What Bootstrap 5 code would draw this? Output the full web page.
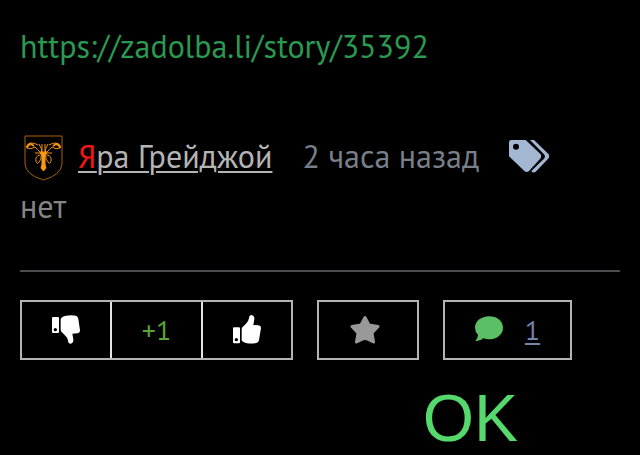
<!DOCTYPE html>
<html lang="ru">
<head>
<meta charset="utf-8">
<meta name="viewport" content="width=device-width, initial-scale=1">
<title>Задолба!ли — 35392</title>
<link href="https://cdn.jsdelivr.net/npm/bootstrap@5.3.0/dist/css/bootstrap.min.css" rel="stylesheet">
<style>
body{background:#000;color:#858585;font:32px/50px "PT Sans","Noto Sans",sans-serif}
.story{padding:21px 20px 0}
.story-link,.story-link:hover{color:#2a9a52}
.meta{margin-top:60px;column-gap:30px}
.crest{margin:4px 15px 0 4px}
.author{color:#b5b5b5;text-decoration-thickness:2px;text-underline-offset:3px}
.author span{color:#f41414}
.when{color:#777f8a}
.tags{margin-top:2px}
.rule{margin:39px 0 28px;border-top:2px solid #4c4d50;opacity:1}
.actions{gap:24px}
.box{height:60px;border:2px solid #b4b4b4;font-size:28px;line-height:56px}
.box svg{margin-bottom:2px}
.vote{width:273px}
.vote>*{flex:1 1 0;background:none;border:0;padding:0;color:#fff}
.vote>*+*{border-left:2px solid #e4e4e4}
.vote .score{color:#58a33a}
.fav{width:102px;background:none;color:#999;padding:0 6px 0 0}
.talk{width:129px;gap:22px;color:#5bbf65}
.talk a{color:#7582aa;text-decoration-thickness:2px;text-underline-offset:3px}
.verdict{margin:25px 102px 0;font:66px/66px "Liberation Sans",Arial,sans-serif;color:#56d86c}
</style>
</head>
<body>
<main class="container-fluid story">
<a class="d-block text-decoration-none story-link" href="https://zadolba.li/story/35392">https://zadolba.li/story/35392</a>

<div class="d-flex flex-wrap align-items-center meta">
<div class="d-flex align-items-center">
<svg class="crest" width="39" height="46" viewBox="0 0 39 46" fill="none" stroke="#f0920e" aria-hidden="true">
<path d="M1 1H38V29Q37 40 19.500 45Q2 40 1 29Z" stroke="#a3620a"/>
<path d="M17 18Q13 14 11 12Q7 15 3 13Q2 9 7 8Q11 8 14 10M22 18Q26 14 28 12Q32 15 36 13Q37 9 32 8Q28 8 25 10M16 20Q11 21 12 26Q13 30 15 27Q18 24 17 21M23 20Q28 21 27 26Q26 30 24 27Q21 24 22 21M18 19Q18 13 15 9M21 19Q21 13 24 9M18 18V9M21 18V9M11 18H28M14 15L18 19M25 15L21 19"/>
<path d="M3 13Q3 10 7 9L10 11M36 13Q36 10 32 9L29 11" stroke-width="2"/>
<path d="M16 17H23L21 22V29L22 33L19.500 36L17 33L18 29V22Z" fill="#f89a14"/>
</svg>
<a class="author" href="#author"><span>Я</span>ра Грейджой</a>
</div>
<span class="when">2 часа назад</span>
<svg class="tags" width="41" height="34" viewBox="0 0 123 102" fill="#a3b6d2" role="img" aria-label="Теги">
<path fill-rule="evenodd" d="M7 0H50L95 43Q99 49 95 55L60 93Q53 99 46 93L0 49V7Q0 0 7 0ZM21 11A9 9 0 1 0 21 29A9 9 0 1 0 21 11Z"/>
<path d="M63 0H75L119 43Q123 49 119 55L80 95Q76 98 70 97L67 93L105 56Q111 50 105 43Z"/>
</svg>
<span class="w-100">нет</span>
</div>

<hr class="rule">

<div class="d-flex flex-wrap actions">
<div class="d-flex box vote">
<button type="button" class="d-flex align-items-center justify-content-center" aria-label="Минус">
<svg width="28" height="29" viewBox="0 0 84 87" fill="currentColor" aria-hidden="true">
<path fill-rule="evenodd" d="M3 6H18Q21 6 21 9V51Q21 54 18 54H3Q0 54 0 51V9Q0 6 3 6ZM10 39A5 5 0 1 0 10 49A5 5 0 1 0 10 39Z"/>
<path d="M26 12Q29 5 42 2Q57-1 72 2Q78 4 79 12L84 46Q84 54 76 55L61 56L64 73Q65 84 56 86Q49 86 48 77C46 65 38 61 32 54Q26 49 26 44Z"/>
</svg>
</button>
<span class="text-center score">+1</span>
<button type="button" class="d-flex align-items-center justify-content-center" aria-label="Плюс">
<svg width="28" height="29" viewBox="0 0 84 87" fill="currentColor" aria-hidden="true">
<path fill-rule="evenodd" d="M3 37H18Q21 37 21 40V82Q21 85 18 85H3Q0 85 0 82V40Q0 37 3 37ZM10 69A5 5 0 1 0 10 79A5 5 0 1 0 10 69Z"/>
<path d="M26 76Q29 82 42 85Q57 87 70 84Q77 83 78 75L84 39Q84 32 76 31L61 30L64 13Q65 2 56 0Q49 0 48 9C46 21 38 27 32 33Q26 37 26 42Z"/>
</svg>
</button>
</div>
<button type="button" class="d-flex align-items-center justify-content-center box fav" aria-label="В избранное">
<svg width="30" height="29" viewBox="0 0 30 29" fill="currentColor" stroke="currentColor" stroke-width="3" stroke-linejoin="round" aria-hidden="true">
<path d="M15 2.500L19 10L28 11.500L22 18L23.500 27L15 23L6.500 27L8 18L2 11.500L11 10Z"/>
</svg>
</button>
<div class="d-flex align-items-center justify-content-center box talk">
<svg width="28" height="26" viewBox="0 0 84 78" fill="currentColor" aria-hidden="true">
<path d="M42 1C18 1 0 16 0 35Q0 47 9 56Q9 66 1 75Q14 77 25 67Q33 70 42 70C66 70 84 55 84 35S66 1 42 1Z"/>
</svg>
<a href="#comments" aria-label="Комментарии: 1">1</a>
</div>
</div>

<div class="text-end verdict">OK</div>
</main>
<script src="https://cdn.jsdelivr.net/npm/bootstrap@5.3.0/dist/js/bootstrap.bundle.min.js"></script>
</body>
</html>
